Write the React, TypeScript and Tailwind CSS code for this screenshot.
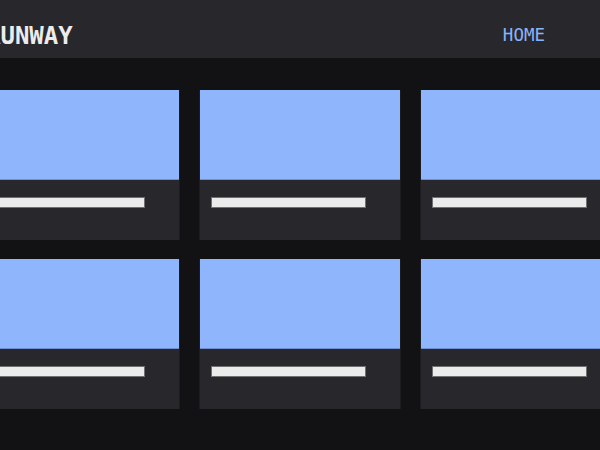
import React from 'react';

const cards = [1, 2, 3, 4, 5, 6];

const Card: React.FC = () => (
  <div className="flex flex-col bg-[#28282c] border-x border-[#1d1d21]">
    <div className="h-[90px] bg-[#8fb6fd] border-b border-[#6f8fcf]" />
    <div className="h-[60px] pt-[17px] pl-[11px]">
      <div className="h-[11px] w-[155px] bg-[#ebebeb] border border-[#707070]" />
    </div>
  </div>
);

const App: React.FC = () => {
  return (
    <div className="min-h-screen bg-[#121214] overflow-hidden" style={{ fontFamily: '"DejaVu Sans Mono", "Liberation Mono", monospace' }}>
      <header className="h-[58px] bg-[#28282c] flex justify-center">
        <div className="w-[644px] shrink-0 flex items-center justify-between pt-[14px] pl-[8px] pr-[77px]">
          <span className="text-[24px] font-bold leading-none text-[#ececec]">RUNWAY</span>
          <nav>
            <a className="text-[17.5px] leading-none text-[#8ab4f8]">HOME</a>
          </nav>
        </div>
      </header>
      <main className="flex justify-center pt-[32px]">
        <div className="w-[644px] shrink-0 grid grid-cols-3 gap-[19px]">
          {cards.map(c => (
            <Card key={c} />
          ))}
        </div>
      </main>
    </div>
  );
};

export default App;
